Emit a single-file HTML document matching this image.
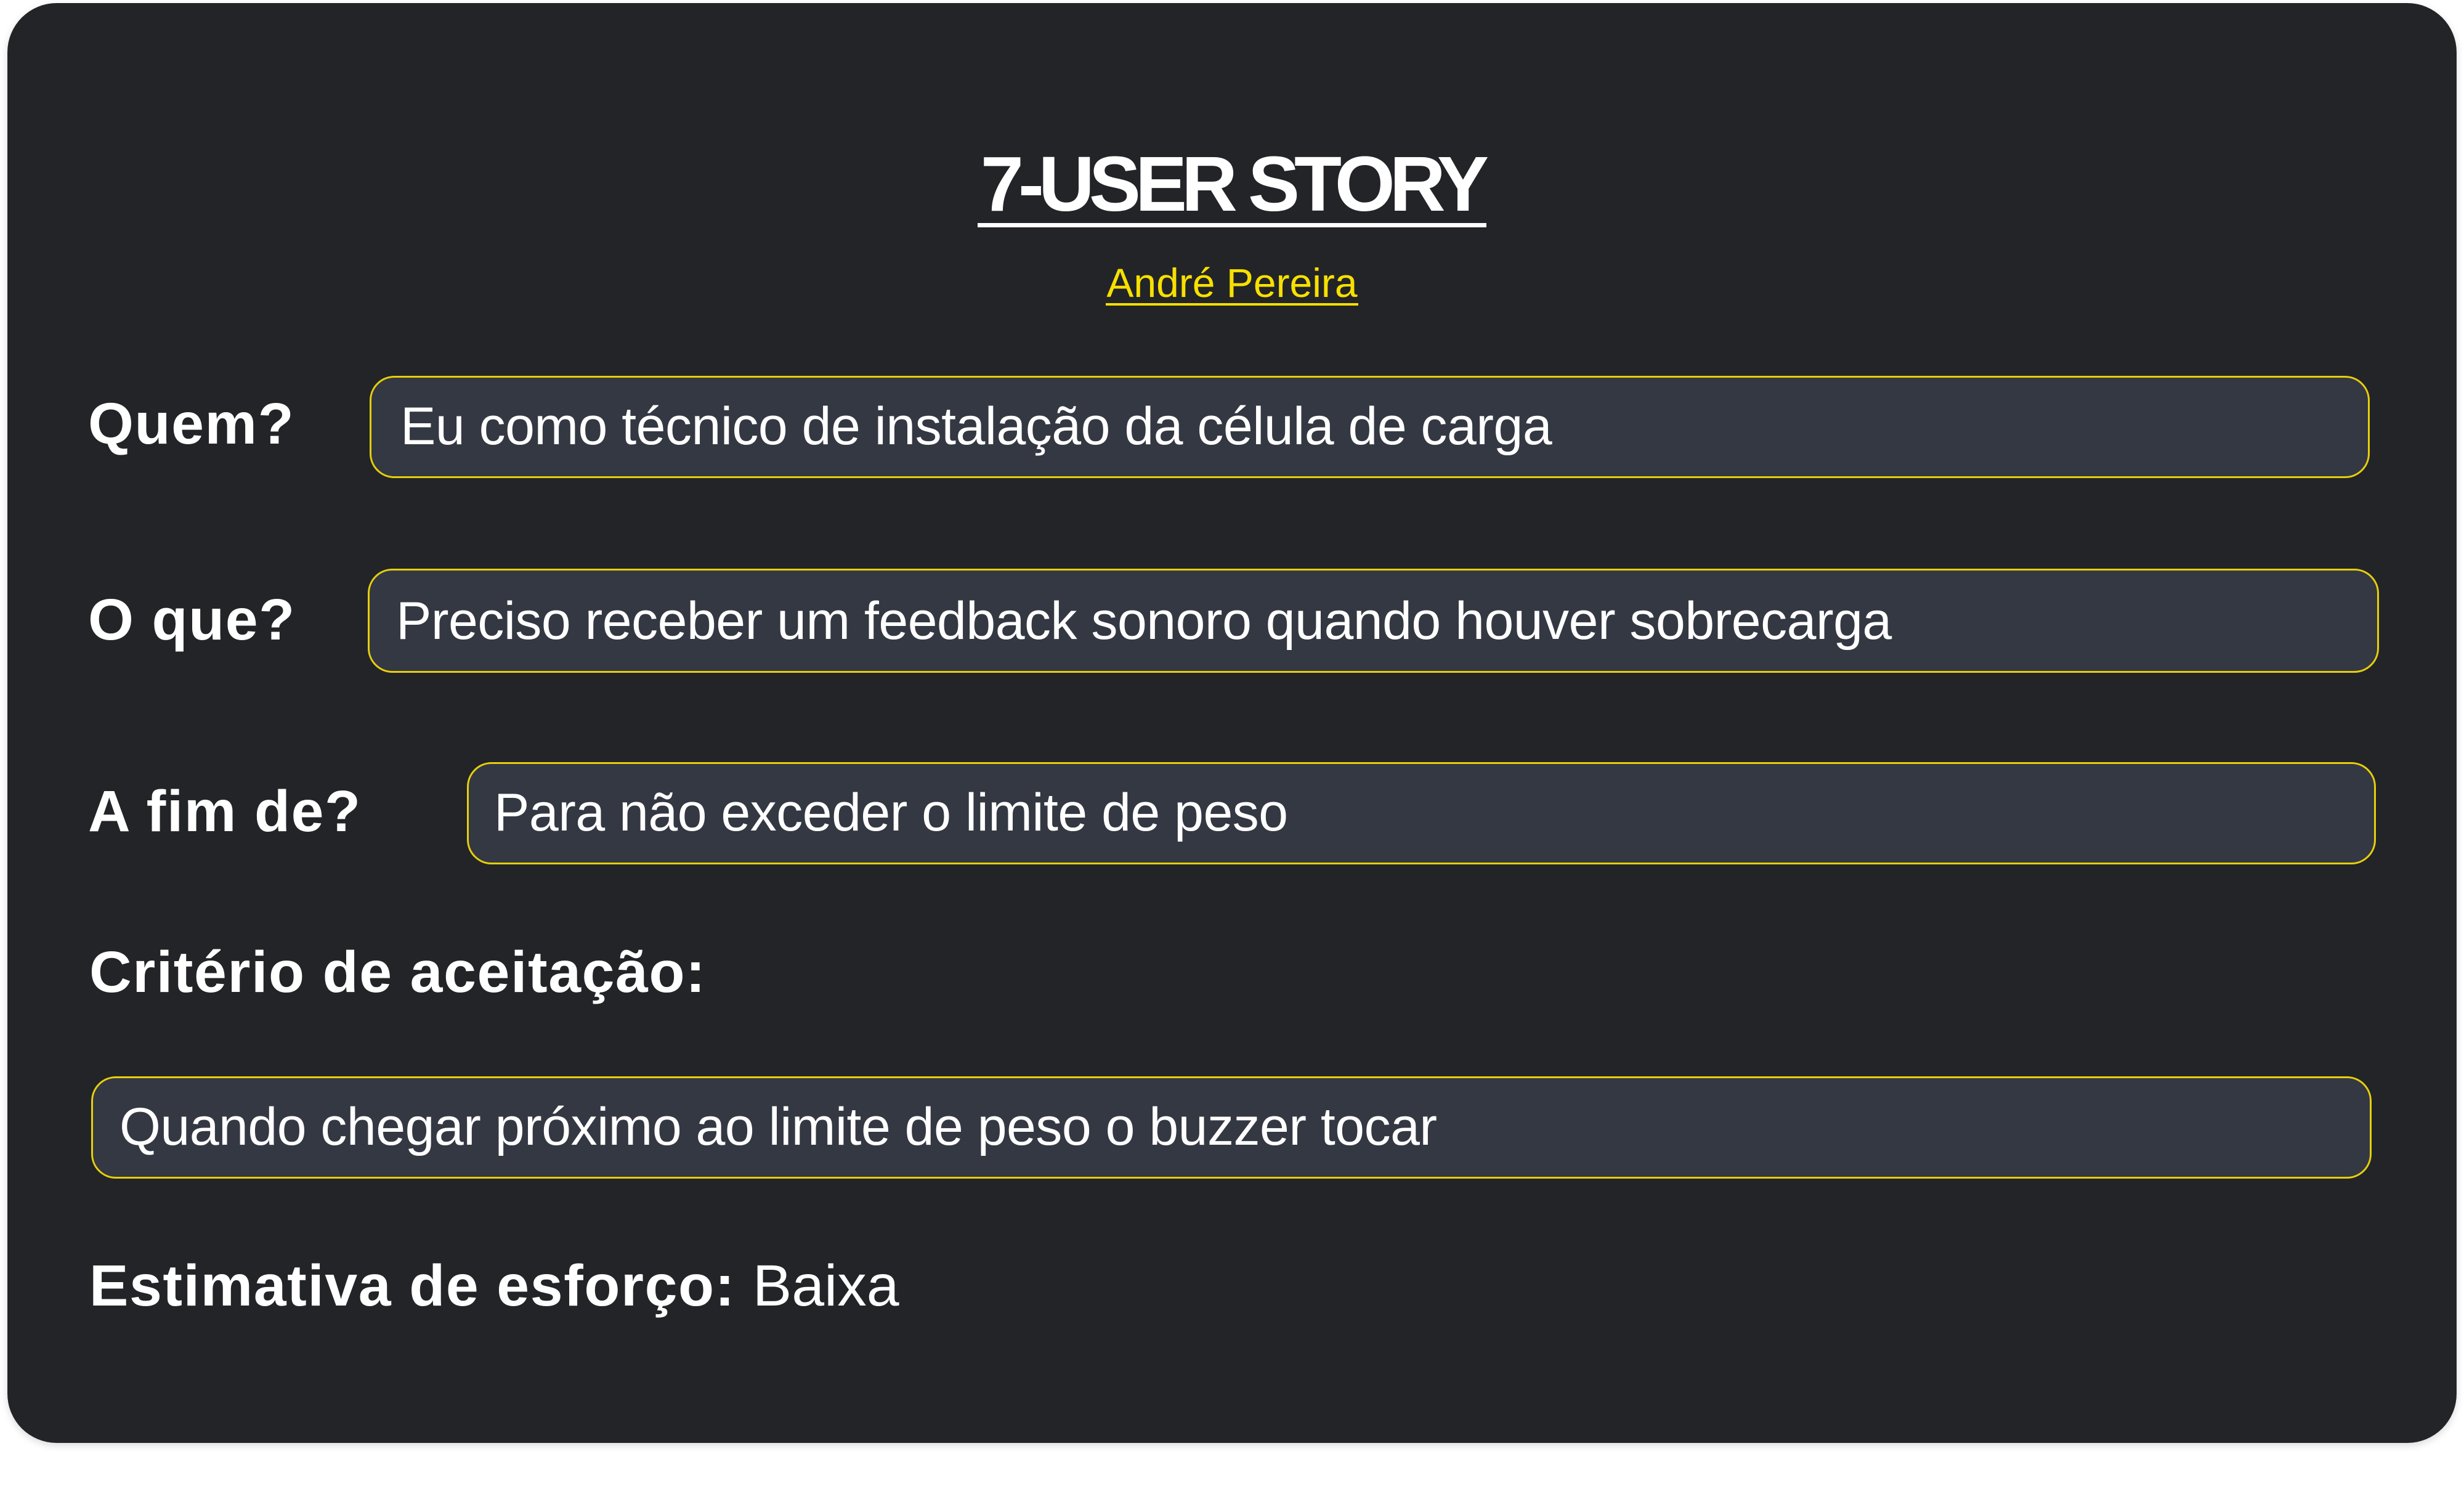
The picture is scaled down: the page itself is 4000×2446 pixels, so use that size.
<!DOCTYPE html>
<html><head><meta charset="utf-8"><style>
html,body{margin:0;padding:0;background:#fff;}
body{width:4000px;height:2446px;position:relative;overflow:hidden;font-family:"Liberation Sans",sans-serif;}
.card{position:absolute;left:12px;top:5px;width:3976px;height:2337px;background:#232427;border-radius:80px;box-shadow:0 4px 12px rgba(0,0,0,0.15);}
.t{position:absolute;line-height:1;white-space:nowrap;color:#fff;}
.lab{font-weight:bold;font-size:95px;letter-spacing:1.6px;}
.box{position:absolute;background:#343842;border:3px solid #e6cf0c;border-radius:40px;box-sizing:border-box;}
.bt{font-size:86px;letter-spacing:-0.5px;}
</style></head><body>
<div class="card"></div>
<div class="t" style="left:0;width:4000px;text-align:center;top:236px;font-size:126px;font-weight:bold;letter-spacing:-9px;">7-USER STORY</div>
<div style="position:absolute;left:1587px;top:362px;width:826px;height:7px;background:#fff;"></div>
<div class="t" style="left:0;width:4000px;text-align:center;top:426px;font-size:66px;color:#f7e000;">André Pereira</div>
<div style="position:absolute;left:1795px;top:492px;width:410px;height:4px;background:#f7e000;"></div>

<div class="t lab" style="left:143px;top:641px;">Quem?</div>
<div class="box" style="left:600px;top:610px;width:3247px;height:166px;"></div>
<div class="t bt" style="left:650px;top:649px;">Eu como técnico de instalação da célula de carga</div>

<div class="t lab" style="left:143px;top:959px;">O que?</div>
<div class="box" style="left:597px;top:923px;width:3265px;height:169px;"></div>
<div class="t bt" style="left:643px;top:965px;">Preciso receber um feedback sonoro quando houver sobrecarga</div>

<div class="t lab" style="left:143px;top:1270px;">A fim de?</div>
<div class="box" style="left:758px;top:1237px;width:3099px;height:166px;"></div>
<div class="t bt" style="left:802px;top:1276px;">Para não exceder o limite de peso</div>

<div class="t lab" style="left:145px;top:1531px;">Critério de aceitação:</div>
<div class="box" style="left:148px;top:1747px;width:3702px;height:166px;"></div>
<div class="t bt" style="left:194px;top:1786px;">Quando chegar próximo ao limite de peso o buzzer tocar</div>

<div class="t lab" style="left:145px;top:2040px;">Estimativa de esforço: <span style="font-weight:normal;letter-spacing:0;">Baixa</span></div>
</body></html>
